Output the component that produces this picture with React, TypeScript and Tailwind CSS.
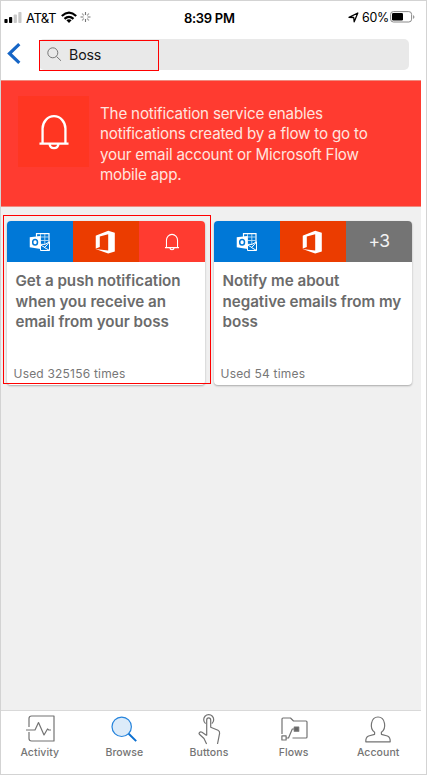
import type { ReactNode } from "react";

function OutlookIcon() {
  return (
    <svg className="-translate-x-[0.5px]" width="21" height="20" viewBox="0 0 21 20" fill="none">
      <path d="M7 1.6h12.5v12H7z" stroke="#fff" strokeWidth="1.2" />
      <path d="M7 5h12.5M7 8.5h12.5M11 2v10M15.3 2v10" stroke="#b9dbf5" strokeWidth="0.9" />
      <path d="M11 12.4h4.5l4.5-2.6v8.7H11z" fill="#0078d7" stroke="#fff" strokeWidth="1" />
      <path d="m11 13 4.3 2.4L20 10M14.8 15.4l5 3" stroke="#fff" strokeWidth="1" />
      <path d="M0 5.3 11.2 4v13L0 15.2z" fill="#fff" />
      <ellipse cx="5.6" cy="10.3" rx="2.4" ry="2.8" stroke="#0078d7" strokeWidth="1.5" />
    </svg>
  );
}

function OfficeIcon() {
  return (
    <svg className="-translate-x-[0.5px]" width="20" height="24" viewBox="0 0 20 24">
      <path
        d="M0 5.7 12.7.7 19.3 2.8v18.8l-6.6 2L0 19l12.7 1.5V4.2L4.3 6.4v10.5L0 18.8z"
        fill="#fff"
      />
    </svg>
  );
}

function BellIcon({ large = false }: { large?: boolean }) {
  return (
    <svg
      className={large ? "h-[36px] w-[31px] translate-x-[0.5px]" : "h-[18px] w-[15px] -translate-x-[0.5px]"}
      viewBox="0 0 32 36"
      fill="none"
      stroke="#fff"
      strokeWidth={large ? 2.4 : 2.3}
    >
      <path d="M1 30h30M4.2 30V14.5a11.8 12.8 0 0 1 23.6 0V30M11.5 30.5c.4 5.5 8.6 5.5 9 0" />
    </svg>
  );
}

function StatusBar() {
  return (
    <div className="flex h-[38px] w-[420px] shrink-0 text-[13.3px] leading-[34px] text-black">
      <div className="flex w-[183px] pl-[3px]">
        <svg className="mt-[11px]" width="18" height="12" viewBox="0 0 18 12">
          <rect x=".4" y="7" width="3.2" height="4" rx=".8" fill="#000" />
          <rect x="5" y="5" width="3.2" height="6" rx=".8" fill="#000" />
          <rect x="9.7" y="2.5" width="3.2" height="8.5" rx=".8" fill="#c9c9c9" />
          <rect x="14.3" y="0" width="3.2" height="11" rx=".8" fill="#c9c9c9" />
        </svg>
        <span className="ml-[4px] w-[31px] whitespace-nowrap text-[13.2px] tracking-[-0.6px]">AT&amp;T</span>
        <svg className="ml-[4px] mt-[10px]" width="16" height="13" viewBox="0 0 16 13" fill="none" stroke="#000" strokeWidth="2.2">
          <path d="M.8 5Q8-1.7 15.2 5M3.5 7.9Q8 3.8 12.5 7.9" />
          <path d="m8 12 2.6-2.7Q8 7.1 5.4 9.3z" fill="#000" stroke="none" />
        </svg>
        <svg className="ml-[3px] mt-[10px]" width="11" height="12" viewBox="0 0 11 12" stroke="#777" strokeWidth="1.1">
          <path d="M5.5 1v3M5.5 8v3M.5 6h3M7.5 6h3" />
          <path d="m2 2.5 2 2M7 7.5l2 2M9 2.5l-2 2M4 7.5l-2 2" stroke="#aaa" />
        </svg>
      </div>
      <span className="w-[160px] whitespace-nowrap text-[13px] font-semibold tracking-[-0.3px]">8:39 PM</span>
      <div className="flex w-[77px] pl-[4px]">
        <svg className="mt-[11px]" width="11" height="11" viewBox="0 0 11 11" fill="none" stroke="#000" strokeWidth="1.3">
          <path d="M1 5.3 9.8 1 6.2 9.8 5.7 5.5z" strokeLinejoin="round" />
        </svg>
        <span className="ml-[3px] w-[26px] whitespace-nowrap text-[12.4px] tracking-[-0.3px]">60%</span>
        <svg className="ml-[2px] mt-[10px]" width="25" height="12" viewBox="0 0 25 12">
          <rect x=".6" y=".6" width="21" height="10.4" rx="2.8" fill="none" stroke="#8a8a8a" />
          <rect x="2" y="2" width="11" height="7.6" rx="1.3" fill="#000" />
          <path d="M23 4v4q1.5-.8 1.5-2T23 4" fill="#999" />
        </svg>
      </div>
    </div>
  );
}

function SearchHeader() {
  return (
    <div className="flex h-[41px] w-[420px] shrink-0 pl-[6px]">
      <svg className="mt-[4px]" width="14" height="21" viewBox="0 0 14 21" fill="none" stroke="#1565c6" strokeWidth="3.2">
        <path d="M12.3 1.2 2.5 10.5l9.8 9.3" />
      </svg>
      <div className="relative ml-[18px] flex h-[31px] w-[370px] rounded-[5px] bg-[#e9e9e9]">
        <svg className="ml-[8px] mt-[8px]" width="15" height="15" viewBox="0 0 15 15" fill="none" stroke="#777">
          <circle cx="5.8" cy="5.8" r="5" />
          <path d="m9.5 9.5 4.5 4.3" />
        </svg>
        <span className="ml-[7px] text-[14.2px] leading-[31px] tracking-[-0.15px] text-[#161616]">Boss</span>
        <div className="absolute left-0 top-px h-[31px] w-[120px] border border-[#ff0000]" />
      </div>
    </div>
  );
}

function Banner() {
  return (
    <div className="flex h-[127px] w-[420px] shrink-0 border-y border-[#f08a7e] bg-[#ff3b30] pl-[17px] pt-[15px]">
      <div className="flex h-[71px] w-[71px] shrink-0 items-center justify-center bg-[#ff3622]">
        <BellIcon large />
      </div>
      <p className="ml-[11px] mt-[8px] whitespace-nowrap text-[15.2px] leading-[20.4px] tracking-[-0.2px] text-[#ffe4df]">
        The notification service enables
        <br />
        notifications created by a flow to go to
        <br />
        your email account or Microsoft Flow
        <br />
        mobile app.
      </p>
    </div>
  );
}

function Card({ last, title, used }: { last: ReactNode; title: string[]; used: string }) {
  return (
    <div className="flex h-[164px] w-[198px] flex-col overflow-hidden rounded-[4px] bg-white shadow-[0_1px_2px_rgba(0,0,0,0.3)]">
      <div className="flex h-[41px] w-full shrink-0">
        <div className="flex w-[66px] items-center justify-center bg-[#0078d7]"><OutlookIcon /></div>
        <div className="flex w-[66px] items-center justify-center bg-[#eb3c00]"><OfficeIcon /></div>
        {last}
      </div>
      <h2 className="ml-[8.5px] mt-[9px] h-[91px] whitespace-nowrap text-[15.2px] font-semibold leading-[20.5px] tracking-[-0.03px] text-[#6b6b6b]">
        {title.map((line) => <span key={line} className="block">{line}</span>)}
      </h2>
      <p className="ml-[6.5px] whitespace-nowrap text-[12px] leading-[23px] tracking-[0.2px] text-[#777]">{used}</p>
    </div>
  );
}

function Tab({ label, children }: { label: string; children: ReactNode }) {
  return (
    <div className="flex w-[84.6px] flex-col items-center">
      <svg width="32" height="34" viewBox="0 0 32 34" fill="none" stroke="#737373" strokeWidth="1.2" strokeLinejoin="round">
        {children}
      </svg>
      <span className="mt-[-1px] text-[10.5px] font-medium leading-[16px] tracking-[0.08px] text-[#747474]">{label}</span>
    </div>
  );
}

function TabBar() {
  return (
    <nav className="flex h-[64px] w-[420px] shrink-0 border-t border-[#d9d9d9] bg-white pt-px">
      <div className="-ml-[3.5px] flex">
        <Tab label="Activity">
          <path d="M5 15V6.5Q5 4 7.5 4H30v25H7.5Q5 29 5 26.5V20M2 18h9l3.5-7.5L20 23l3.5-6 1.3 1H27" />
        </Tab>
        <Tab label="Browse">
          <circle cx="13.7" cy="14.8" r="9.7" fill="#dcebf9" stroke="#2684dc" />
          <path d="m20.7 21.8 7.5 7.3" stroke="#0b6fd1" strokeWidth="2" />
        </Tab>
        <Tab label="Buttons">
          <path d="M12.6 11.6a5 5 0 1 1 6.2 0" />
          <path d="M13.7 23.5V8c0-2.8 4-2.8 4 0v7.3l7.3 3q1.9.9 1.6 3l-2.1 10.7M13.7 23.5 9 20.3c-2-1-3.7.7-2.6 2l4.6 4.2 2.6 5.5" />
        </Tab>
        <Tab label="Flows">
          <path d="M4 22V7q0-1 1-1h7.5l3 3H28q1 0 1 1v15q0 1-1 1H14.5" />
          <rect x="3.9" y="23.8" width="4.2" height="4.2" />
          <path d="M8.1 26h2.4l3.8-9h3" />
          <rect x="16.3" y="15" width="4.4" height="4.2" fill="#666" />
        </Tab>
        <Tab label="Account">
          <path d="M12.6 20.2C7.4 17 8.4 5 16 5s8.6 12 3.4 15.2v2.1l6 1.7q3 1.1 2.8 5.8H3.8q-.2-4.7 2.8-5.8l6-1.7z" />
        </Tab>
      </div>
    </nav>
  );
}

export default function App() {
  return (
    <main className="relative flex h-[775px] w-[427px] flex-col overflow-hidden border border-[#d3d3d3] bg-white font-[Inter,sans-serif]">
      <StatusBar />
      <SearchHeader />
      <Banner />
      <section className="h-[503px] w-[420px] shrink-0 bg-[#f0f0f0] pl-[6px] pt-[14px]">
        <div className="flex gap-[9px]">
          <Card
            last={<div className="flex w-[66px] items-center justify-center bg-[#ff3b30]"><BellIcon /></div>}
            title={["Get a push notification", "when you receive an", "email from your boss"]}
            used="Used 325156 times"
          />
          <Card
            last={<div className="flex w-[66px] items-center justify-center bg-[#747474] text-[17.5px] tracking-[-0.5px] text-[#f2f2f2]">+3</div>}
            title={["Notify me about", "negative emails from my", "boss"]}
            used="Used 54 times"
          />
        </div>
      </section>
      <TabBar />
      <div className="absolute left-[2px] top-[214px] h-[169px] w-[208px] border border-[#ff0000]" />
    </main>
  );
}
